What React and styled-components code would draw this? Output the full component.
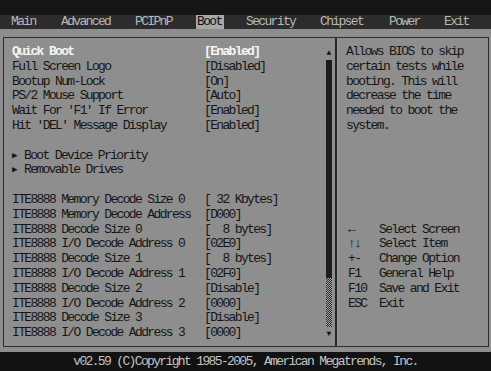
import styled, { createGlobalStyle } from "styled-components";

const GlobalStyle = createGlobalStyle`
  body {
    margin: 0;
    background: #8e8e8e;
  }
`;

const tabs = [
  { name: "Main", width: 50 },
  { name: "Advanced", width: 74 },
  { name: "PCIPnP", width: 62 },
  { name: "Boot", width: 49, active: true },
  { name: "Security", width: 74 },
  { name: "Chipset", width: 69 },
  { name: "Power", width: 55 },
  { name: "Exit", width: 40 },
];

const settings = [
  { label: "Quick Boot", value: "[Enabled]", selected: true },
  { label: "Full Screen Logo", value: "[Disabled]" },
  { label: "Bootup Num-Lock", value: "[On]" },
  { label: "PS/2 Mouse Support", value: "[Auto]" },
  { label: "Wait For 'F1' If Error", value: "[Enabled]" },
  { label: "Hit 'DEL' Message Display", value: "[Enabled]" },
];

const submenus = ["Boot Device Priority", "Removable Drives"];

const ite = [
  ["ITE8888 Memory Decode Size 0", "[ 32 Kbytes]"],
  ["ITE8888 Memory Decode Address", "[D000]"],
  ["ITE8888 Decode Size 0", "[  8 bytes]"],
  ["ITE8888 I/O Decode Address 0", "[02E0]"],
  ["ITE8888 Decode Size 1", "[  8 bytes]"],
  ["ITE8888 I/O Decode Address 1", "[02F0]"],
  ["ITE8888 Decode Size 2", "[Disable]"],
  ["ITE8888 I/O Decode Address 2", "[0000]"],
  ["ITE8888 Decode Size 3", "[Disable]"],
  ["ITE8888 I/O Decode Address 3", "[0000]"],
];

const help = [
  "Allows BIOS to skip",
  "certain tests while",
  "booting. This will",
  "decrease the time",
  "needed to boot the",
  "system.",
];

const keys = [
  ["\u2190", "Select Screen"],
  ["\u2191\u2193", "Select Item"],
  ["+-", "Change Option"],
  ["F1", "General Help"],
  ["F10", "Save and Exit"],
  ["ESC", "Exit"],
];

const Screen = styled.div`
  width: 491px;
  height: 371px;
  display: flex;
  flex-direction: column;
  font-family: "Liberation Mono", "DejaVu Sans Mono", monospace;
  font-size: 13px;
  letter-spacing: -1.65px;
  white-space: pre;
  overflow: hidden;
`;

const TopBar = styled.div`
  height: 15px;
  background: #161616;
`;

const MenuBar = styled.div`
  height: 14px;
  background: #2c2c2c;
  display: flex;
  padding-left: 11px;
`;

const Tab = styled.div`
  width: ${(p) => p.$w}px;
  line-height: 14px;
  color: #b8b8b8;
  span {
    display: inline-block;
    margin-left: ${(p) => (p.$active ? -1 : 0)}px;
    padding: 0 ${(p) => (p.$active ? 2 : 0)}px 0 ${(p) => (p.$active ? 1 : 0)}px;
    background: ${(p) => (p.$active ? "#a8a8a8" : "transparent")};
    color: ${(p) => (p.$active ? "#111" : "#b8b8b8")};
  }
`;

const Body = styled.div`
  flex: 1;
  background: #8e8e8e;
  padding: 8px 2px 5px 3px;
  display: flex;
`;

const Frame = styled.div`
  flex: 1;
  display: flex;
  border: 1px solid #2e2e2e;
`;

const LeftPanel = styled.div`
  width: 331px;
  border-right: 2px solid #262626;
  display: flex;
`;

const List = styled.div`
  flex: 1;
  padding: 7px 0 0 8px;
  display: flex;
  flex-direction: column;
`;

const Row = styled.div`
  height: 14.8px;
  line-height: 14.8px;
  display: grid;
  grid-template-columns: 192px 1fr;
  color: ${(p) => (p.$selected ? "#f6f6f6" : "#161616")};
  font-weight: ${(p) => (p.$selected ? "bold" : "normal")};
`;

const Gap = styled.div`
  height: 14.8px;
`;

const Arrow = styled.span`
  font-size: 9px;
  letter-spacing: 0;
  display: inline-block;
  width: 12px;
  vertical-align: 1px;
`;

const Scroll = styled.div`
  width: 10px;
  margin-right: 1px;
  display: flex;
  flex-direction: column;
  align-items: center;
  padding-top: 7px;
`;

const ScrollArrow = styled.div`
  height: ${(p) => p.$h}px;
  font-size: 8px;
  letter-spacing: 0;
  line-height: ${(p) => p.$h}px;
  color: #111;
`;

const Thumb = styled.div`
  width: 6px;
  height: 218px;
  background: #1c1c1c;
`;

const Track = styled.div`
  width: 6px;
  height: 49px;
  background: repeating-conic-gradient(#2a2a2a 0 25%, #a4a4a4 0 50%) 0 0 / 2px 2px;
`;

const RightPanel = styled.div`
  flex: 1;
  padding: 7px 0 0 8px;
  color: #161616;
  border-left: 1px solid #9c9c9c;
`;

const Line = styled.div`
  height: 14.8px;
  line-height: 14.8px;
`;

const Legend = styled.div`
  margin-top: 88.8px;
`;

const KeyRow = styled.div`
  height: 14.8px;
  line-height: 14.8px;
  display: grid;
  grid-template-columns: 31px 1fr;
  padding-left: 2px;
`;

const Footer = styled.div`
  height: 19px;
  line-height: 19px;
  background: #121212;
  color: #c4c4c4;
  text-align: center;
`;

export default function App() {
  return (
    <>
      <GlobalStyle />
      <Screen>
        <TopBar />
        <MenuBar>
          {tabs.map((t) => (
            <Tab key={t.name} $w={t.width} $active={t.active}>
              <span>{t.name}</span>
            </Tab>
          ))}
        </MenuBar>
        <Body>
          <Frame>
            <LeftPanel>
              <List>
                {settings.map((s) => (
                  <Row key={s.label} $selected={s.selected}>
                    <span>{s.label}</span>
                    <span>{s.value}</span>
                  </Row>
                ))}
                <Gap />
                {submenus.map((m) => (
                  <Row key={m}>
                    <span>
                      <Arrow>{"\u25B6"}</Arrow>
                      {m}
                    </span>
                  </Row>
                ))}
                <Gap />
                {ite.map(([l, v]) => (
                  <Row key={l}>
                    <span>{l}</span>
                    <span>{v}</span>
                  </Row>
                ))}
              </List>
              <Scroll>
                <ScrollArrow $h={15}>{"\u25B2"}</ScrollArrow>
                <Thumb />
                <Track />
                <ScrollArrow $h={13}>{"\u25BC"}</ScrollArrow>
              </Scroll>
            </LeftPanel>
            <RightPanel>
              {help.map((h) => (
                <Line key={h}>{h}</Line>
              ))}
              <Legend>
                {keys.map(([k, d]) => (
                  <KeyRow key={k}>
                    <span>{k}</span>
                    <span>{d}</span>
                  </KeyRow>
                ))}
              </Legend>
            </RightPanel>
          </Frame>
        </Body>
        <Footer>v02.59 (C)Copyright 1985-2005, American Megatrends, Inc.</Footer>
      </Screen>
    </>
  );
}
